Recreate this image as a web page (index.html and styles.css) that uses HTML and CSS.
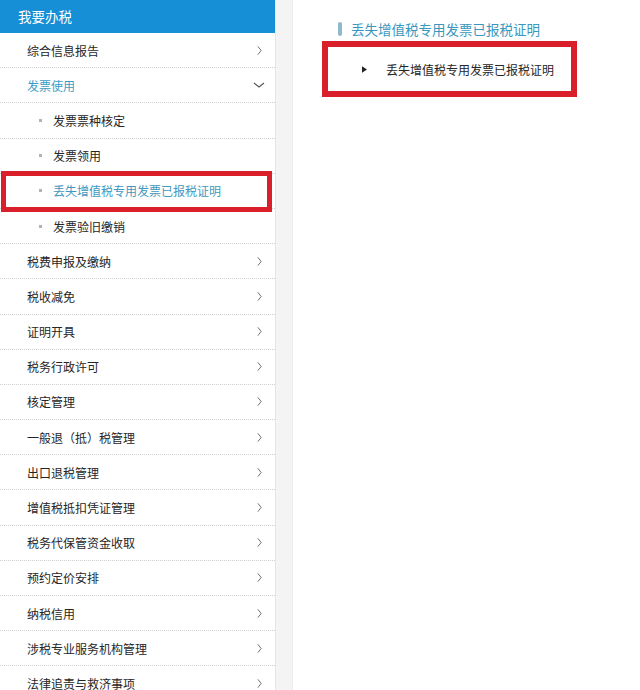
FILE: index.html
```html
<!DOCTYPE html>
<html lang="zh-CN">
<head>
<meta charset="utf-8">
<title>我要办税</title>
<link rel="stylesheet" href="styles.css">
</head>
<body>
<div class="page">
  <aside class="sidebar">
    <div class="side-head">我要办税</div>
    <div class="row"><span>综合信息报告</span><svg class="chev" viewBox="0 0 6 12"><polyline points="1,1 5,6 1,11"/></svg></div>
    <div class="row open"><span>发票使用</span><svg class="down" viewBox="0 0 12 6"><polyline points="1,1 6,5 11,1"/></svg></div>
    <div class="sub"><i class="dot"></i><span>发票票种核定</span></div>
    <div class="sub"><i class="dot"></i><span>发票领用</span></div>
    <div class="sub active"><i class="dot"></i><span>丢失增值税专用发票已报税证明</span><b class="mark"></b></div>
    <div class="sub last"><i class="dot"></i><span>发票验旧缴销</span></div>
    <div class="row"><span>税费申报及缴纳</span><svg class="chev" viewBox="0 0 6 12"><polyline points="1,1 5,6 1,11"/></svg></div>
    <div class="row"><span>税收减免</span><svg class="chev" viewBox="0 0 6 12"><polyline points="1,1 5,6 1,11"/></svg></div>
    <div class="row"><span>证明开具</span><svg class="chev" viewBox="0 0 6 12"><polyline points="1,1 5,6 1,11"/></svg></div>
    <div class="row"><span>税务行政许可</span><svg class="chev" viewBox="0 0 6 12"><polyline points="1,1 5,6 1,11"/></svg></div>
    <div class="row"><span>核定管理</span><svg class="chev" viewBox="0 0 6 12"><polyline points="1,1 5,6 1,11"/></svg></div>
    <div class="row"><span>一般退（抵）税管理</span><svg class="chev" viewBox="0 0 6 12"><polyline points="1,1 5,6 1,11"/></svg></div>
    <div class="row"><span>出口退税管理</span><svg class="chev" viewBox="0 0 6 12"><polyline points="1,1 5,6 1,11"/></svg></div>
    <div class="row"><span>增值税抵扣凭证管理</span><svg class="chev" viewBox="0 0 6 12"><polyline points="1,1 5,6 1,11"/></svg></div>
    <div class="row"><span>税务代保管资金收取</span><svg class="chev" viewBox="0 0 6 12"><polyline points="1,1 5,6 1,11"/></svg></div>
    <div class="row"><span>预约定价安排</span><svg class="chev" viewBox="0 0 6 12"><polyline points="1,1 5,6 1,11"/></svg></div>
    <div class="row"><span>纳税信用</span><svg class="chev" viewBox="0 0 6 12"><polyline points="1,1 5,6 1,11"/></svg></div>
    <div class="row"><span>涉税专业服务机构管理</span><svg class="chev" viewBox="0 0 6 12"><polyline points="1,1 5,6 1,11"/></svg></div>
    <div class="row"><span>法律追责与救济事项</span><svg class="chev" viewBox="0 0 6 12"><polyline points="1,1 5,6 1,11"/></svg></div>
  </aside>
  <div class="gutter"></div>
  <main class="main">
    <div class="title"><i class="bar"></i><span>丢失增值税专用发票已报税证明</span></div>
    <div class="item-box">
      <svg class="tri" viewBox="0 0 6 8"><polygon points="0,0 6,4 0,8"/></svg>
      <span>丢失增值税专用发票已报税证明</span>
    </div>
  </main>
</div>
</body>
</html>
```
FILE: styles.css
```css
html, body {
  margin: 0;
  padding: 0;
  background: #ffffff;
}
body {
  font-family: "Noto Sans CJK SC", "Noto Sans", "Liberation Sans", sans-serif;
  color: #262626;
  width: 640px;
  height: 690px;
  overflow: hidden;
}
.page {
  display: flex;
  height: 690px;
}
.sidebar {
  width: 275px;
  flex: 0 0 275px;
  border-right: 1px solid #e6e6e6;
  background: #ffffff;
}
.side-head {
  height: 33px;
  line-height: 33px;
  background: #178fd6;
  color: #ffffff;
  font-size: 13.5px;
  padding-left: 18px;
}
.row, .sub {
  box-sizing: border-box;
  height: 35.2px;
  border-bottom: 1px dotted #cfcfcf;
  display: flex;
  align-items: center;
  font-size: 12px;
  position: relative;
}
.row {
  justify-content: space-between;
  padding: 0 13px 0 27px;
}
.row.open span {
  color: #3d9cc6;
}
.chev {
  width: 5px;
  height: 11px;
  fill: none;
  stroke: #555555;
  stroke-width: 1;
}
.down {
  width: 12px;
  height: 6px;
  margin-right: -3px;
  fill: none;
  stroke: #555555;
  stroke-width: 1.2;
}
.sub {
  padding-left: 39px;
  gap: 11px;
}
.dot {
  width: 3px;
  height: 3px;
  background: #b3b3b3;
  display: block;
}
.sub.active span {
  color: #4199c0;
}
.mark {
  position: absolute;
  left: 1px;
  right: 3px;
  top: -3px;
  bottom: -4px;
  border: 5px solid #d9202a;
}
.gutter {
  width: 16px;
  flex: 0 0 16px;
  background: #f4f4f4;
  border-right: 1px solid #ececec;
}
.main {
  flex: 1;
  padding: 21px 0 0 29px;
}
.title {
  display: flex;
  align-items: center;
  margin-left: 16px;
  height: 16px;
  gap: 9px;
}
.bar {
  display: block;
  width: 4px;
  height: 14px;
  border-radius: 2px;
  background: #8fb9cc;
}
.title span {
  font-size: 13.5px;
  color: #3a97bd;
}
.item-box {
  box-sizing: border-box;
  margin-top: 4px;
  width: 255px;
  height: 56px;
  border: 6px solid #d9202a;
  display: flex;
  align-items: center;
  padding-left: 34px;
}
.tri {
  width: 5px;
  height: 7px;
  fill: #222222;
  margin-right: 19px;
}
.item-box span {
  font-size: 12px;
  color: #262626;
}
```
